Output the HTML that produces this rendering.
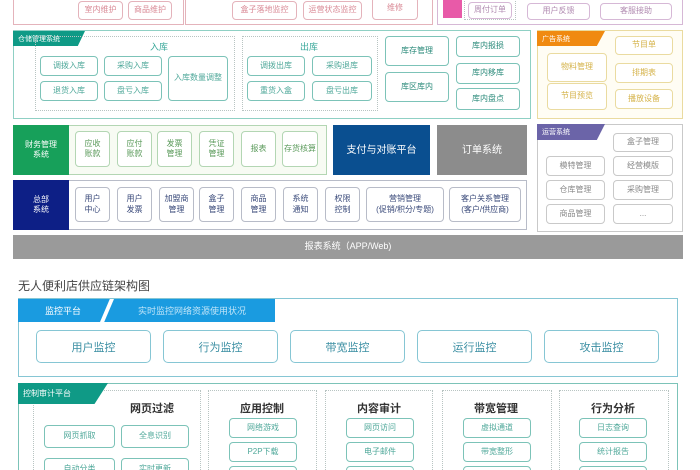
<!DOCTYPE html><html><head><meta charset="utf-8"><style>
html,body{margin:0;width:700px;height:470px;overflow:hidden}
body{background:#fff;font-family:"Liberation Sans","Noto Sans CJK SC",sans-serif;position:relative}
div{position:absolute;box-sizing:border-box}
.b{border:1.5px solid #7cc3b8;border-radius:4px;display:flex;align-items:center;justify-content:center;text-align:center;font-size:8px;color:#4fa89a;line-height:1.3;background:#fff}
.d{border:1.5px dotted #b8c4c2}
.p{border-color:#e4b3bb;color:#d98a96}
.y{border-color:#eadba0;color:#d5b34a}
.g{border-color:#c9c9c9;color:#8a8a8a}
.gr{border-color:#b3d6b3;color:#5a9a5a}
.n{border-color:#b8bcc8;color:#3a4a7a}
.t{color:#fff;font-size:7px;display:flex;align-items:center;padding-left:5px;white-space:nowrap}
.m{border:1.5px solid #86c6d4;border-radius:5px;display:flex;align-items:center;justify-content:center;font-size:11px;color:#3c8fa3}
.h{font-size:11px;color:#333;font-weight:bold}
</style></head><body>
<div style="left:13px;top:-2px;width:171px;height:27px;border:1.5px solid #e4b3bb;border-top:none"></div>
<div class="b p" style="left:78px;top:1px;width:45px;height:19px">室内维护</div>
<div class="b p" style="left:128px;top:1px;width:44px;height:19px">商品维护</div>
<div style="left:185px;top:-2px;width:248px;height:27px;border:1.5px solid #e4b3bb;border-top:none"></div>
<div class="b p" style="left:232px;top:1px;width:65px;height:19px">盒子落地监控</div>
<div class="b p" style="left:303px;top:1px;width:59px;height:19px">运营状态监控</div>
<div class="b p" style="left:372px;top:-3px;width:46px;height:23px">维修</div>
<div style="left:437px;top:-2px;width:246px;height:27px;border:1.5px solid #d6b8d6;border-top:none"></div>
<div style="left:443px;top:0;width:19px;height:18px;background:#e85aa8"></div>
<div class="d" style="left:464px;top:-2px;width:52px;height:22px;border-top:none"></div>
<div class="b p" style="left:468px;top:2px;width:44px;height:17px;border-color:#d6b8d6;color:#b08ab0">周付订单</div>
<div class="b p" style="left:527px;top:3px;width:63px;height:17px;border-color:#d6b8d6;color:#b08ab0">用户反馈</div>
<div class="b p" style="left:600px;top:3px;width:72px;height:17px;border-color:#d6b8d6;color:#b08ab0">客服接助</div>
<div style="left:13px;top:30px;width:518px;height:89px;border:1.5px solid #8fd0c4"></div>
<div class="t" style="left:13px;top:31px;width:72px;height:15px;background:#0f9a86;clip-path:polygon(0 0,100% 0,90% 100%,0 100%)">仓储管理系统</div>
<div class="d" style="left:35px;top:36px;width:200px;height:75px"></div>
<div style="left:150px;top:40px;font-size:9px;color:#3aa89a">入库</div>
<div class="b" style="left:40px;top:56px;width:58px;height:20px">调拨入库</div>
<div class="b" style="left:104px;top:56px;width:58px;height:20px">采购入库</div>
<div class="b" style="left:40px;top:81px;width:58px;height:20px">退货入库</div>
<div class="b" style="left:104px;top:81px;width:58px;height:20px">盘亏入库</div>
<div class="b" style="left:168px;top:56px;width:60px;height:45px">入库数量调整</div>
<div class="d" style="left:242px;top:36px;width:136px;height:75px"></div>
<div style="left:300px;top:40px;font-size:9px;color:#3aa89a">出库</div>
<div class="b" style="left:247px;top:56px;width:58px;height:20px">调拨出库</div>
<div class="b" style="left:312px;top:56px;width:60px;height:20px">采购退库</div>
<div class="b" style="left:247px;top:81px;width:58px;height:20px">重货入盒</div>
<div class="b" style="left:312px;top:81px;width:60px;height:20px">盘亏出库</div>
<div class="b" style="left:385px;top:36px;width:64px;height:30px;color:#2a8a7a">库存管理</div>
<div class="b" style="left:385px;top:72px;width:64px;height:30px;color:#2a8a7a">库区库内</div>
<div class="b" style="left:456px;top:36px;width:64px;height:21px;color:#2a8a7a">库内报损</div>
<div class="b" style="left:456px;top:63px;width:64px;height:21px;color:#2a8a7a">库内移库</div>
<div class="b" style="left:456px;top:88px;width:64px;height:22px;color:#2a8a7a">库内盘点</div>
<div style="left:537px;top:30px;width:146px;height:89px;border:1.5px solid #eadba0;background:#fffdf4"></div>
<div class="t" style="left:537px;top:31px;width:68px;height:15px;background:#f08a10;clip-path:polygon(0 0,100% 0,88% 100%,0 100%)">广告系统</div>
<div class="b y" style="left:615px;top:36px;width:58px;height:19px">节目单</div>
<div class="b y" style="left:547px;top:53px;width:60px;height:29px">物料管理</div>
<div class="b y" style="left:615px;top:63px;width:58px;height:20px">排期表</div>
<div class="b y" style="left:547px;top:83px;width:60px;height:27px">节目预览</div>
<div class="b y" style="left:615px;top:89px;width:58px;height:20px">播放设备</div>
<div style="left:13px;top:125px;width:314px;height:50px;border:1.5px solid #b3d6b3;background:#f7fbf3"></div>
<div class="b" style="left:13px;top:125px;width:56px;height:50px;background:#17a05a;color:#fff;border:none;border-radius:0">财务管理<br>系统</div>
<div class="b gr" style="left:75px;top:131px;width:35px;height:36px">应收<br>账款</div>
<div class="b gr" style="left:117px;top:131px;width:35px;height:36px">应付<br>账款</div>
<div class="b gr" style="left:157px;top:131px;width:35px;height:36px">发票<br>管理</div>
<div class="b gr" style="left:199px;top:131px;width:35px;height:36px">凭证<br>管理</div>
<div class="b gr" style="left:241px;top:131px;width:35px;height:36px">报表</div>
<div class="b gr" style="left:282px;top:131px;width:36px;height:36px">存货核算</div>
<div class="b" style="left:333px;top:125px;width:97px;height:50px;background:#0a4f90;color:#fff;border:none;border-radius:0;font-size:10px">支付与对账平台</div>
<div class="b" style="left:437px;top:125px;width:90px;height:50px;background:#8c8c8c;color:#fff;border:none;border-radius:0;font-size:10px">订单系统</div>
<div style="left:537px;top:124px;width:146px;height:108px;border:1.5px solid #c9c9c9"></div>
<div class="t" style="left:537px;top:124px;width:68px;height:16px;background:#6b64a8;clip-path:polygon(0 0,100% 0,88% 100%,0 100%)">运营系统</div>
<div class="b g" style="left:613px;top:133px;width:60px;height:19px">盒子管理</div>
<div class="b g" style="left:546px;top:156px;width:59px;height:20px">模特管理</div>
<div class="b g" style="left:613px;top:156px;width:60px;height:20px">经营模版</div>
<div class="b g" style="left:546px;top:180px;width:59px;height:20px">仓库管理</div>
<div class="b g" style="left:613px;top:180px;width:60px;height:20px">采购管理</div>
<div class="b g" style="left:546px;top:204px;width:59px;height:20px">商品管理</div>
<div class="b g" style="left:613px;top:204px;width:60px;height:20px">...</div>
<div style="left:13px;top:180px;width:514px;height:50px;border:1.5px solid #b8bcc8"></div>
<div class="b" style="left:13px;top:180px;width:56px;height:50px;background:#0d1f86;color:#fff;border:none;border-radius:0">总部<br>系统</div>
<div class="b n" style="left:75px;top:187px;width:35px;height:35px">用户<br>中心</div>
<div class="b n" style="left:117px;top:187px;width:35px;height:35px">用户<br>发票</div>
<div class="b n" style="left:159px;top:187px;width:35px;height:35px">加盟商<br>管理</div>
<div class="b n" style="left:199px;top:187px;width:35px;height:35px">盒子<br>管理</div>
<div class="b n" style="left:241px;top:187px;width:35px;height:35px">商品<br>管理</div>
<div class="b n" style="left:283px;top:187px;width:35px;height:35px">系统<br>通知</div>
<div class="b n" style="left:325px;top:187px;width:35px;height:35px">权限<br>控制</div>
<div class="b n" style="left:366px;top:187px;width:78px;height:35px">营销管理<br>(促销/积分/专题)</div>
<div class="b n" style="left:449px;top:187px;width:72px;height:35px">客户关系管理<br>(客户/供应商)</div>
<div class="b" style="left:13px;top:235px;width:670px;height:24px;background:#9a9a9a;color:#fff;border:none;border-radius:0;font-size:9px">报表系统（APP/Web)</div>
<div style="left:18px;top:277px;font-size:12px;color:#444">无人便利店供应链架构图</div>
<div style="left:18px;top:298px;width:660px;height:79px;border:1.5px solid #86c6d4"></div>
<div style="left:18px;top:299px;width:257px;height:23px;background:#1a9be0"></div>
<div style="left:100px;top:299px;width:14px;height:23px;background:#fff;clip-path:polygon(70% 0,100% 0,30% 100%,0 100%)"></div>
<div style="left:45px;top:304px;font-size:9px;color:#fff">监控平台</div>
<div style="left:138px;top:304px;font-size:9px;color:#bfe4f8">实时监控网络资源使用状况</div>
<div class="m" style="left:36px;top:330px;width:115px;height:33px">用户监控</div>
<div class="m" style="left:163px;top:330px;width:115px;height:33px">行为监控</div>
<div class="m" style="left:290px;top:330px;width:115px;height:33px">带宽监控</div>
<div class="m" style="left:417px;top:330px;width:115px;height:33px">运行监控</div>
<div class="m" style="left:544px;top:330px;width:115px;height:33px">攻击监控</div>
<div style="left:18px;top:383px;width:660px;height:95px;border:1.5px solid #7cc3b8"></div>
<div class="d" style="left:33px;top:390px;width:168px;height:90px"></div>
<div class="d" style="left:208px;top:390px;width:109px;height:90px"></div>
<div class="d" style="left:325px;top:390px;width:108px;height:90px"></div>
<div class="d" style="left:442px;top:390px;width:110px;height:90px"></div>
<div class="d" style="left:559px;top:390px;width:110px;height:90px"></div>
<div class="t" style="left:18px;top:383px;width:90px;height:21px;background:#0f9a86;clip-path:polygon(0 0,100% 0,85% 100%,0 100%);font-size:8px">控制审计平台</div>
<div class="h" style="left:130px;top:400px">网页过滤</div>
<div class="h" style="left:240px;top:400px">应用控制</div>
<div class="h" style="left:357px;top:400px">内容审计</div>
<div class="h" style="left:474px;top:400px">带宽管理</div>
<div class="h" style="left:591px;top:400px">行为分析</div>
<div class="b" style="left:44px;top:425px;width:71px;height:23px">网页抓取</div>
<div class="b" style="left:121px;top:425px;width:68px;height:23px">全息识别</div>
<div class="b" style="left:44px;top:458px;width:71px;height:23px">自动分类</div>
<div class="b" style="left:121px;top:458px;width:68px;height:23px">实时更新</div>
<div class="b" style="left:229px;top:418px;width:68px;height:20px">网络游戏</div>
<div class="b" style="left:229px;top:442px;width:68px;height:20px">P2P下载</div>
<div class="b" style="left:229px;top:466px;width:68px;height:20px"></div>
<div class="b" style="left:346px;top:418px;width:68px;height:20px">网页访问</div>
<div class="b" style="left:346px;top:442px;width:68px;height:20px">电子邮件</div>
<div class="b" style="left:346px;top:466px;width:68px;height:20px"></div>
<div class="b" style="left:463px;top:418px;width:68px;height:20px">虚拟通道</div>
<div class="b" style="left:463px;top:442px;width:68px;height:20px">带宽整形</div>
<div class="b" style="left:463px;top:466px;width:68px;height:20px"></div>
<div class="b" style="left:579px;top:418px;width:68px;height:20px">日志查询</div>
<div class="b" style="left:579px;top:442px;width:68px;height:20px">统计报告</div>
<div class="b" style="left:579px;top:466px;width:68px;height:20px"></div>
</body></html>
